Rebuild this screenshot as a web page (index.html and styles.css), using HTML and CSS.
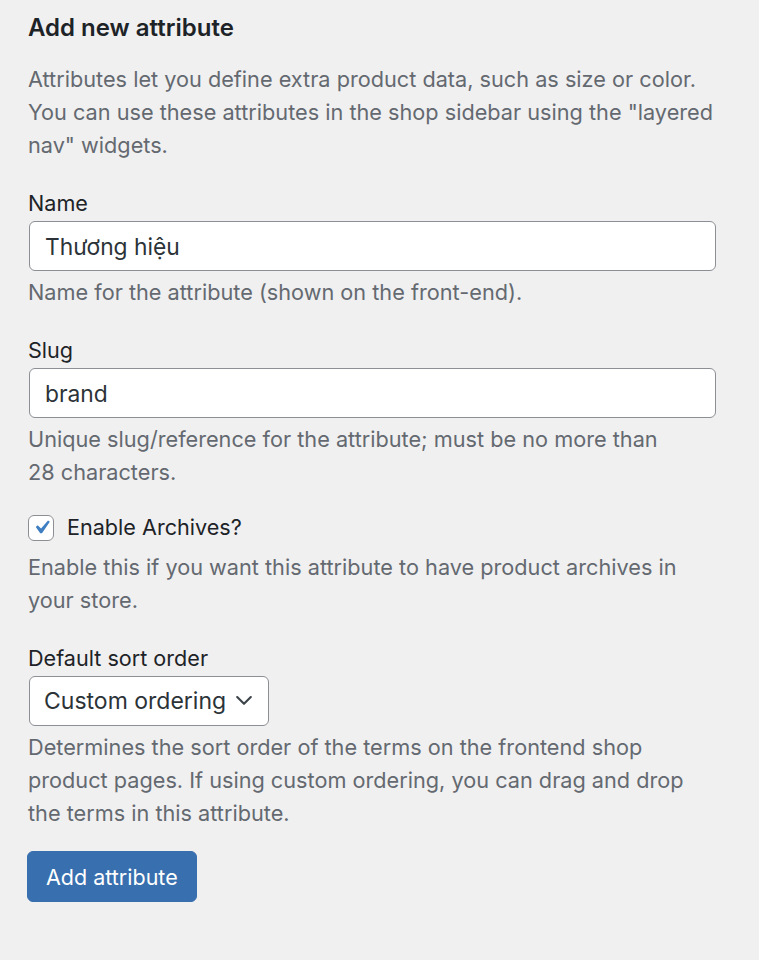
FILE: index.html
```html
<!DOCTYPE html>
<html lang="en">
<head>
<meta charset="utf-8">
<title>Add new attribute</title>
<link rel="stylesheet" href="styles.css">
</head>
<body>
<div class="form-wrap">
  <h2 class="title">Add new attribute</h2>
  <p class="intro">Attributes let you define extra product data, such as size or color. You can use these attributes in the shop sidebar using the "layered nav" widgets.</p>

  <div class="field">
    <label class="label" for="attr-name">Name</label>
    <input class="text-input" id="attr-name" type="text" value="Thương hiệu">
    <p class="description">Name for the attribute (shown on the front-end).</p>
  </div>

  <div class="field">
    <label class="label" for="attr-slug">Slug</label>
    <input class="text-input" id="attr-slug" type="text" value="brand">
    <p class="description">Unique slug/reference for the attribute; must be no more than 28 characters.</p>
  </div>

  <div class="field field-check">
    <label class="check-row" for="attr-public">
      <span class="checkbox">
        <svg viewBox="0 0 20 20" width="27" height="27"><path d="M14.83 4.89l1.34.94-5.81 8.38H9.02L5.78 9.67l1.34-1.25 2.57 2.4z" fill="#3f7fc1"/></svg>
      </span>
      <span class="check-text">Enable Archives?</span>
    </label>
    <p class="description after-check">Enable this if you want this attribute to have product archives in your store.</p>
  </div>

  <div class="field">
    <label class="label" for="attr-order">Default sort order</label>
    <div class="select-wrap">
      <select class="select" id="attr-order">
        <option>Custom ordering</option>
        <option>Name</option>
        <option>Name (numeric)</option>
        <option>Term ID</option>
      </select>
      <svg class="chevron" viewBox="0 0 16 12" width="16" height="12"><polyline points="1.2,2 8,8.8 14.8,2" fill="none" stroke="#3c434a" stroke-width="2.1" stroke-linecap="round" stroke-linejoin="round"/></svg>
    </div>
    <p class="description">Determines the sort order of the terms on the frontend shop product pages. If using custom ordering, you can drag and drop the terms in this attribute.</p>
  </div>

  <button class="button-primary" type="button">Add attribute</button>
</div>
</body>
</html>
```

FILE: styles.css
```css
html, body {
  margin: 0;
  padding: 0;
  background: #f0f0f1;
}

body {
  font-family: Inter, "Noto Sans", "DejaVu Sans", sans-serif;
  color: #1d2327;
}

.form-wrap {
  width: 689px;
  padding: 13px 0 0 28px;
}

.title {
  margin: 0;
  font-size: 24px;
  line-height: 30px;
  font-weight: 600;
  color: #1d2327;
}

.intro {
  margin: 20px 0 0;
  font-size: 21.7px;
  line-height: 33px;
  color: #646970;
}

.field {
  margin-top: 25px;
  display: flex;
  flex-direction: column;
  align-items: flex-start;
}

.field-check {
  margin-top: 22px;
}

.label {
  font-size: 21.6px;
  line-height: 33px;
  color: #1d2327;
  margin-bottom: 1px;
}

.text-input {
  box-sizing: border-box;
  width: 687px;
  height: 50px;
  margin: 0 1px;
  padding: 0 15px;
  border: 1px solid #8c8f94;
  border-radius: 6px;
  background: #fff;
  font-family: inherit;
  font-size: 22.8px;
  color: #2c3338;
  outline: none;
}

.description {
  margin: 5px 0 0;
  width: 657px;
  font-size: 21.7px;
  line-height: 33px;
  color: #646970;
}

.description.after-check {
  margin-top: 7px;
}

.check-row {
  display: flex;
  align-items: center;
  gap: 13px;
  font-size: 21.6px;
  line-height: 33px;
  color: #1d2327;
}

.checkbox {
  box-sizing: border-box;
  width: 26px;
  height: 26px;
  border: 1px solid #8c8f94;
  border-radius: 6px;
  background: #fff;
  display: flex;
  align-items: center;
  justify-content: center;
}

.checkbox svg {
  display: block;
  flex: none;
}

.select-wrap {
  position: relative;
  margin: 0 1px;
}

.select {
  display: block;
  box-sizing: border-box;
  width: 240px;
  height: 50px;
  padding: 0 40px 0 14px;
  border: 1px solid #8c8f94;
  border-radius: 6px;
  background: #fff;
  font-family: inherit;
  font-size: 23px;
  color: #2c3338;
  appearance: none;
  -webkit-appearance: none;
  outline: none;
}

.chevron {
  position: absolute;
  right: 17px;
  top: 19px;
  pointer-events: none;
}

.button-primary {
  margin: 21px 0 0 -1px;
  box-sizing: border-box;
  height: 51px;
  padding: 0 18px;
  border: 1px solid #386fae;
  border-radius: 6px;
  background: #386fae;
  color: #fff;
  font-family: inherit;
  font-size: 21.5px;
  cursor: pointer;
}
```
